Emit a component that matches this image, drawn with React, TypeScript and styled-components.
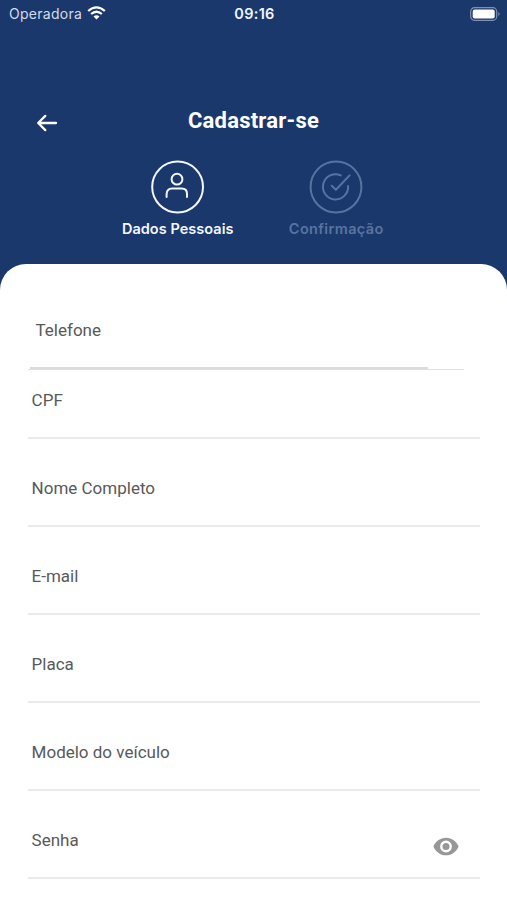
import React from "react";
import styled, { createGlobalStyle } from "styled-components";

const GlobalStyle = createGlobalStyle`
  * { box-sizing: border-box; }
  body { margin: 0; background: #1b386c; }
`;

const Screen = styled.main`
  width: 100%;
  height: 900px;
  display: flex;
  flex-direction: column;
  overflow: hidden;
  background: #1b386c;
  color: #fff;
  font-family: Roboto, sans-serif;
`;

const StatusBar = styled.div`
  height: 28px;
  flex: none;
  display: grid;
  grid-template-columns: 1fr auto 1fr;
  align-items: center;
  padding: 0 7px 0 9px;
  font-family: Inter, sans-serif;
  svg { display: block; }
`;

const Carrier = styled.div`
  display: flex;
  align-items: center;
  gap: 5px;
  font-size: 14px;
  line-height: 20px;
  letter-spacing: 0.28px;
  color: #d3dced;
  svg { margin-top: -2px; }
`;

const Clock = styled.time`
  font-size: 14.5px;
  line-height: 20px;
  font-weight: 600;
  letter-spacing: 0.3px;
  color: #f1f6ff;
`;

const Battery = styled.div`
  justify-self: end;
  margin-top: -1px;
`;

const TitleBar = styled.header`
  height: 40px;
  flex: none;
  margin-top: 72px;
  padding: 0 36px;
  display: grid;
  grid-template-columns: 22px 1fr 22px;
  align-items: center;
`;

const BackButton = styled.button`
  padding: 6px 0 0;
  border: 0;
  background: none;
  color: #fff;
  svg { display: block; }
`;

const Title = styled.h1`
  margin: 0;
  padding-top: 2px;
  text-align: center;
  font-size: 22px;
  line-height: 28px;
  font-weight: 700;
  letter-spacing: 0.22px;
`;

const Steps = styled.nav`
  height: 124px;
  flex: none;
  display: flex;
  justify-content: center;
  padding: 20px 0 0 7px;
`;

const Step = styled.div<{ $active?: boolean }>`
  width: 158.5px;
  display: flex;
  flex-direction: column;
  align-items: center;
  color: ${(p) => (p.$active ? "#f2f7ff" : "#5873a1")};
  svg { display: block; }
`;

const StepLabel = styled.span<{ $spacing: string }>`
  margin-top: 5px;
  font-family: Inter, sans-serif;
  font-size: 14.5px;
  line-height: 20px;
  font-weight: 600;
  white-space: nowrap;
  letter-spacing: ${(p) => p.$spacing};
`;

const Panel = styled.form`
  flex: 1;
  padding: 44px 27px 0 28px;
  border-radius: 26px 26px 0 0;
  background: #fff;
  color: #595959;
`;

const Label = styled.span`
  font-size: 17px;
  line-height: 24px;
`;

const PhoneField = styled.div`
  width: 436px;
  height: 62px;
  display: flex;
  flex-direction: column;
  justify-content: space-between;
  padding: 10px 0 0 1px;
  border-bottom: 1px solid #dfdfdf;
  ${Label} { margin-left: 6.5px; }
`;

const PhoneUnderline = styled.div`
  width: 398px;
  height: 2px;
  margin-left: 1px;
  background: #dcdcdc;
`;

const Field = styled.div<{ $first?: boolean }>`
  height: ${(p) => (p.$first ? "69px" : "88px")};
  display: flex;
  justify-content: space-between;
  align-items: flex-start;
  padding: ${(p) => (p.$first ? "18px" : "37px")} 21px 0 3.6px;
  border-bottom: 2px solid #eaeaea;
`;

const RevealButton = styled.button`
  margin-top: 9px;
  padding: 0;
  border: 0;
  background: none;
  color: #979797;
  svg { display: block; }
`;

const WifiIcon = () => (
  <svg width="19" height="14" viewBox="0 0 19 14" fill="none" stroke="#fff" strokeWidth="2.2">
    <path d="M1.2 5Q9.5-2.3 17.8 5" />
    <path d="M4.1 8Q9.5 3.5 14.9 8" />
    <path d="M6.5 10.5Q9.5 8 12.5 10.5L9.5 13.5Z" fill="#fff" stroke="none" />
  </svg>
);

const BatteryIcon = () => (
  <svg width="30" height="14" viewBox="0 0 30 14">
    <rect x=".7" y=".7" width="26" height="12.6" rx="3.8" fill="none" stroke="#7f91b2" strokeWidth="1.2" />
    <rect x="2.7" y="2.6" width="22" height="8.8" rx="2" fill="#fff" />
    <path d="M28.3 5Q31 7 28.3 9Z" fill="#8292b3" />
  </svg>
);

const BackIcon = () => (
  <svg width="22" height="18" viewBox="0 0 22 18" fill="none" stroke="currentColor" strokeWidth="2.3" strokeLinecap="round" strokeLinejoin="round">
    <path d="M20 9H2.5M9.3 1.9L2.2 9l7.1 7.1" />
  </svg>
);

const PersonIcon = () => (
  <svg width="54" height="54" viewBox="0 0 54 54" fill="none" stroke="currentColor" strokeWidth="2" strokeLinecap="round">
    <circle cx="26.6" cy="27" r="25.4" />
    <circle cx="26" cy="19.2" r="5.4" />
    <path d="M15.6 37v-3.1c0-3.4 2.1-5.4 5.4-5.4h9.6c3.3 0 5.4 2 5.4 5.4V37" />
  </svg>
);

const CheckIcon = () => (
  <svg width="54" height="54" viewBox="0 0 54 54" fill="none" stroke="currentColor" strokeWidth="2" strokeLinecap="round" strokeLinejoin="round">
    <circle cx="27" cy="27" r="25.4" />
    <path d="M31.8 15.4A12.6 12.6 0 1 0 39.1 26" />
    <path d="M22.7 25.7l4.2 4.1L40.6 15.4" />
  </svg>
);

const EyeIcon = () => (
  <svg width="26" height="19" viewBox="0 0 26 19">
    <path fill="currentColor" fillRule="evenodd" d="M13 .7C7.3.7 2.4 4.3.4 9.5 2.4 14.7 7.3 18.3 13 18.3s10.6-3.6 12.6-8.8C23.6 4.3 18.7.7 13 .7Zm0 14.7a5.9 5.9 0 1 1 0-11.8 5.9 5.9 0 0 1 0 11.8Z" />
    <circle cx="13" cy="9.5" r="3.5" fill="currentColor" />
  </svg>
);

const fields = ["CPF", "Nome Completo", "E-mail", "Placa", "Modelo do veículo", "Senha"];

export default function App() {
  return (
    <>
      <GlobalStyle />
      <Screen>
        <StatusBar>
          <Carrier>Operadora <WifiIcon /></Carrier>
          <Clock>09:16</Clock>
          <Battery><BatteryIcon /></Battery>
        </StatusBar>
        <TitleBar>
          <BackButton type="button" aria-label="Voltar"><BackIcon /></BackButton>
          <Title>Cadastrar-se</Title>
        </TitleBar>
        <Steps>
          <Step $active>
            <PersonIcon />
            <StepLabel $spacing="0.04px">Dados Pessoais</StepLabel>
          </Step>
          <Step>
            <CheckIcon />
            <StepLabel $spacing="0.35px">Confirmação</StepLabel>
          </Step>
        </Steps>
        <Panel>
          <PhoneField>
            <Label>Telefone</Label>
            <PhoneUnderline />
          </PhoneField>
          {fields.map((name, i) => (
            <Field key={name} $first={i === 0}>
              <Label>{name}</Label>
              {name === "Senha" && (
                <RevealButton type="button" aria-label="Mostrar senha"><EyeIcon /></RevealButton>
              )}
            </Field>
          ))}
        </Panel>
      </Screen>
    </>
  );
}
